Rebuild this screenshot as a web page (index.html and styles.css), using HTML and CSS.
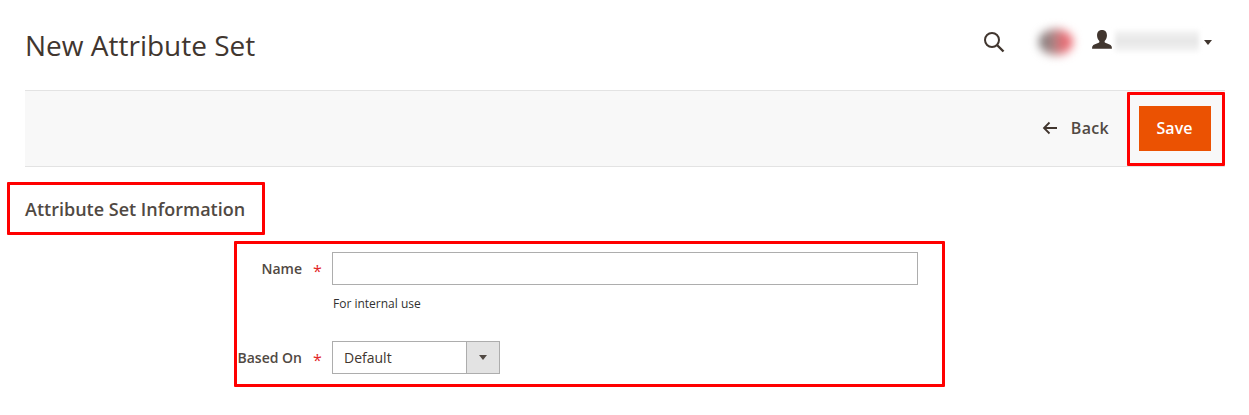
FILE: index.html
```html
<!DOCTYPE html>
<html>
<head>
<meta charset="utf-8">
<title>New Attribute Set</title>
<link rel="stylesheet" href="styles.css">
</head>
<body>
<div class="page">
	<header class="page_header">
		<h1 class="page_title">New Attribute Set</h1>
		<div class="header_tools">
			<svg class="icon_search" width="24" height="24" viewBox="0 0 24 24"><circle cx="10" cy="10" r="7" fill="none" stroke="#41362f" stroke-width="2"/><path d="M15 15l6.500 6.500" fill="none" stroke="#41362f" stroke-width="2.400"/></svg>
			<div class="notify_blur"></div>
			<svg class="icon_user" width="20" height="20" viewBox="0 0 20 20"><path fill="#41362f" d="M10 1c3 0 4.500 2 4.500 4.800 0 2-.8 3.800-1.900 4.900-.4.500-.3 1.500.4 1.900 2 .9 5 1.400 5.800 3.200.2.600.2 1.200.2 2.200H1c0-1 0-1.600.2-2.200.8-1.800 3.800-2.300 5.800-3.200.7-.4.800-1.400.4-1.900C6.300 9.600 5.500 7.800 5.500 5.800 5.500 3 7 1 10 1z"/></svg>
			<div class="name_blur"></div>
			<span class="caret"></span>
		</div>
	</header>

	<div class="actions_bar">
		<a class="back_link" href="#">
			<svg width="16" height="14" viewBox="0 0 16 14"><path d="M15 7H2M7.500 1.500L2 7l5.500 5.500" fill="none" stroke="#41362f" stroke-width="1.800"/></svg>
			<span>Back</span>
		</a>
		<button class="save_btn" type="button">Save</button>
	</div>

	<h2 class="section_title">Attribute Set Information</h2>

	<form class="form">
		<div class="field">
			<label class="field_label">Name</label>
			<span class="required">*</span>
			<div class="field_control">
				<input class="text_input" type="text">
				<div class="field_note">For internal use</div>
			</div>
		</div>
		<div class="field">
			<label class="field_label">Based On</label>
			<span class="required">*</span>
			<div class="field_control">
				<div class="select_box">
					<span class="select_value">Default</span>
					<span class="select_arrow"><i></i></span>
				</div>
			</div>
		</div>
	</form>

	<div class="mark mark_save"></div>
	<div class="mark mark_title"></div>
	<div class="mark mark_form"></div>
</div>
</body>
</html>
```

FILE: styles.css
```css
* { box-sizing: border-box; }
body { margin: 0; background: #fff; color: #41362f; font: 14px "Open Sans", sans-serif; }
h1, h2 { margin: 0; }

.page { position: relative; height: 415px; padding: 0 24px 0 25px; overflow: hidden; }

.page_header { height: 90px; display: flex; align-items: center; justify-content: space-between; }
.page_title { font-size: 28px; font-weight: 400; line-height: 36px; color: #41362f; }
.header_tools { display: flex; align-items: center; margin-top: -6px; padding-right: 13px; }
.icon_search { margin-right: 33px; }
.notify_blur { width: 34px; height: 26px; margin-right: 18px; border-radius: 50%; filter: blur(5px); background: linear-gradient(90deg, #6f6f6f 0, #a88 40%, #ea6a72 75%); }
.icon_user { width: 22px; height: 22px; margin-right: 2px; margin-top: -4px; }
.name_blur { width: 84px; height: 22px; margin-right: 5px; margin-top: -2px; background: linear-gradient(#f6f6f6, #e6e6e6 50%, #f6f6f6); filter: blur(2px); }
.caret { width: 0; height: 0; border: 4px solid transparent; border-top: 5px solid #41362f; border-bottom: 0; }

.actions_bar { height: 77px; display: flex; align-items: center; justify-content: flex-end; padding-right: 14px; background: #f8f8f8; border-top: 1px solid #e3e3e3; border-bottom: 1px solid #e3e3e3; }
.back_link { display: flex; align-items: center; gap: 13px; margin-right: 30px; padding-bottom: 1px; color: #514943; font-size: 16px; font-weight: 600; letter-spacing: .3px; text-decoration: none; }
.save_btn { width: 72px; height: 45px; padding: 0 1px 2px 0; border: 0; background: #eb5202; color: #fff; font: 600 16px "Open Sans", sans-serif; letter-spacing: .1px; }

.section_title { margin-top: 30px; font-size: 18px; font-weight: 600; line-height: 24px; color: #514943; }

.form { margin-top: 31px; padding-left: 207px; }
.field { display: flex; align-items: flex-start; }
.field + .field { margin-top: 28px; }
.field_label { width: 70px; line-height: 33px; font-size: 14px; font-weight: 600; text-align: right; white-space: nowrap; color: #514943; }
.required { width: 30px; padding-left: 11px; line-height: 38px; color: #e22626; font-size: 16px; }
.field_control { width: 586px; }
.text_input { display: block; width: 100%; height: 33px; border: 1px solid #adadad; background: #fff; }
.field_note { margin-top: 10px; padding-left: 1px; font-size: 12px; line-height: 18px; color: #303030; }

.select_box { width: 168px; height: 33px; display: flex; border: 1px solid #adadad; background: #fff; }
.select_value { flex: 1; padding-left: 11px; line-height: 31px; font-size: 14px; }
.select_arrow { width: 33px; display: flex; align-items: center; justify-content: center; background: #e3e3e3; border-left: 1px solid #adadad; }
.select_arrow i { width: 0; height: 0; border: 4px solid transparent; border-top: 5px solid #514943; border-bottom: 0; }

/* red annotation frames drawn over the page */
.mark { position: absolute; border: 3px solid #f00; border-radius: 1px; }
.mark_save { left: 1127px; top: 92px; width: 98px; height: 74px; }
.mark_title { left: 7px; top: 182px; width: 258px; height: 53px; }
.mark_form { left: 234px; top: 241px; width: 711px; height: 146px; }
```
